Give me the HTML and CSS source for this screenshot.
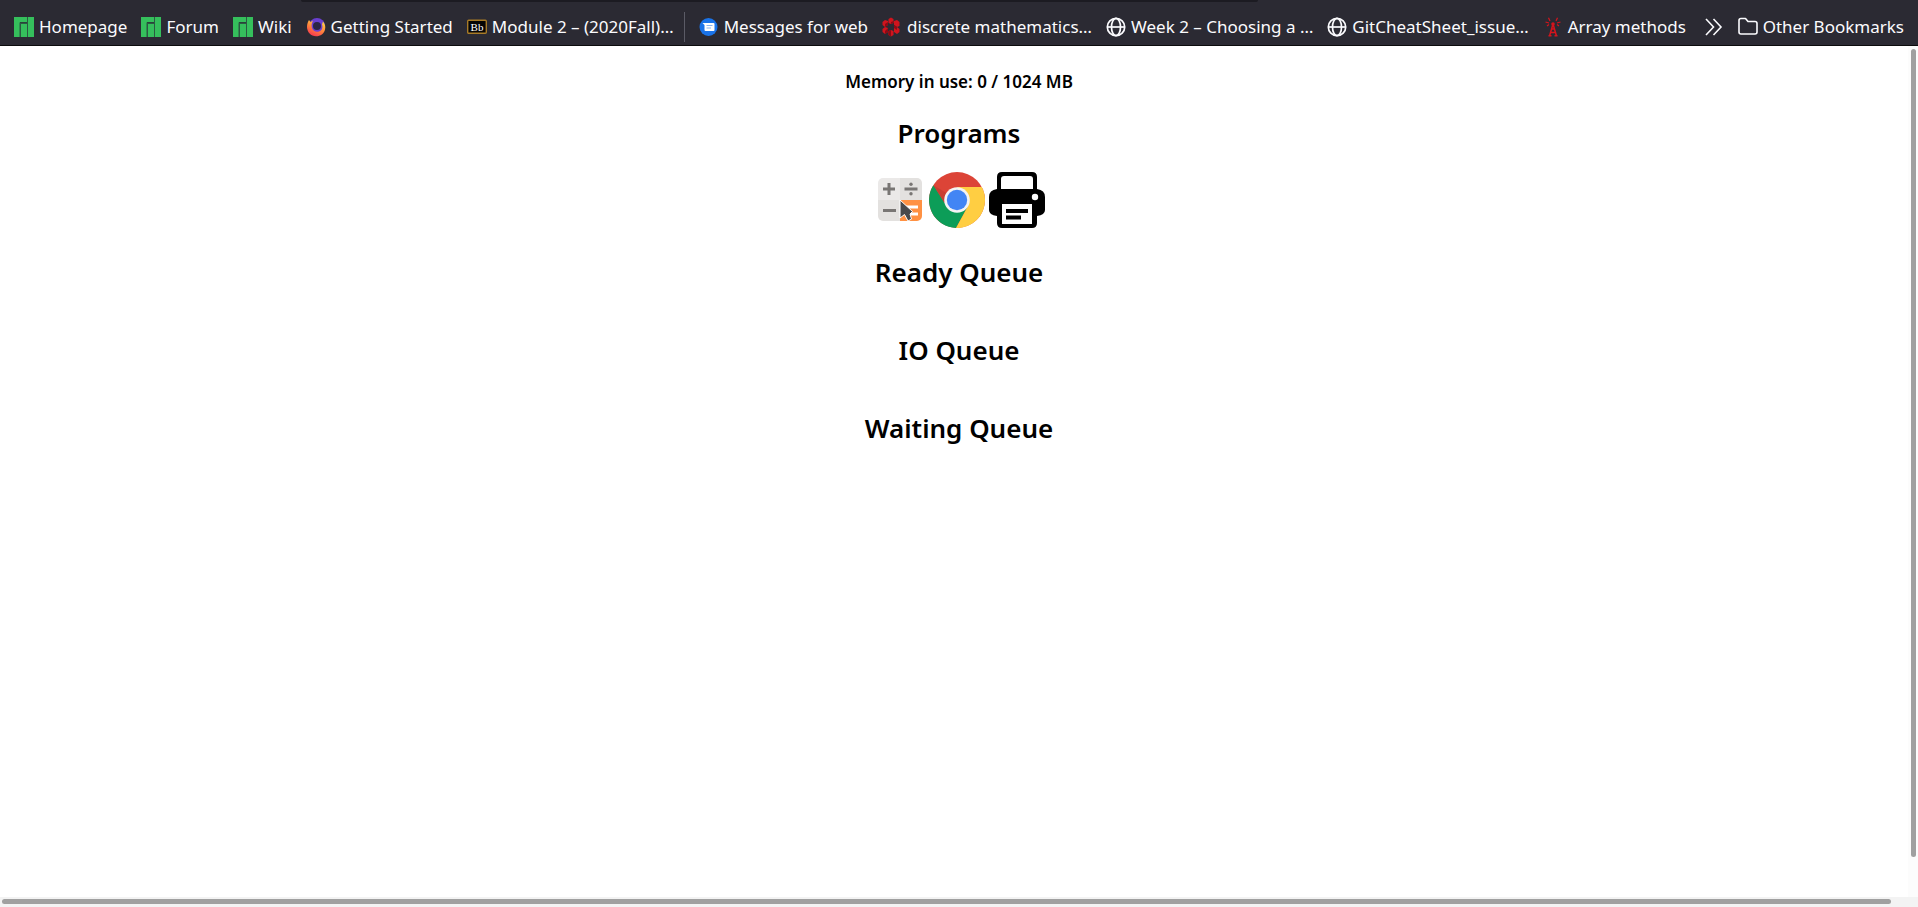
FILE: index.html
```
<!DOCTYPE html>
<html lang="en">
<head>
<meta charset="utf-8">
<title>Memory scheduler</title>
<link rel="stylesheet" href="styles.css">
</head>
<body>
<svg class="defs" aria-hidden="true">
  <symbol id="manjaro" viewBox="0 0 20 20"><path fill="#35bf5c" d="M0 0h13v5H6v15H0zM7 7h6v13H7zM14 0h6v20h-6z"/><path fill="#2b5a42" d="M5.500 5.500H13V7H7v13H5.500zM13 0h1v20h-1z"/></symbol>
  <symbol id="globe" viewBox="0 0 20 20"><g fill="none" stroke="#fbfbfe" stroke-width="1.700"><circle cx="10" cy="10" r="8.700"/><ellipse cx="10" cy="10" rx="4.500" ry="8.700"/><path d="M1.500 10h17"/></g></symbol>
</svg>
<nav class="bookmarks" aria-label="Bookmarks">
  <span class="tab-edge"></span>
  <a class="bookmark" href="#"><svg class="icon"><use href="#manjaro"/></svg>Homepage</a>
  <a class="bookmark" href="#"><svg class="icon"><use href="#manjaro"/></svg>Forum</a>
  <a class="bookmark" href="#"><svg class="icon"><use href="#manjaro"/></svg>Wiki</a>
  <a class="bookmark" href="#"><svg class="icon" viewBox="0 0 20 20"><defs><linearGradient id="fox" x1=".8" y1="0" x2=".3" y2="1"><stop offset="0" stop-color="#ffe14a"/><stop offset=".5" stop-color="#ff8a3c"/><stop offset="1" stop-color="#f5344f"/></linearGradient></defs><circle cx="11" cy="9" r="8" fill="#6a3fd0"/><path fill="url(#fox)" d="M3 3l1.500 2 2.500-1.500C6 6 5 8 6 11c1 3 4 4.500 7 3.500 3-1 4-4 3-7l1-3c2 2.500 2.800 5 2 8-.8 4-4.500 6.800-9 6.800C5 19.300 1 15 1 10c0-3 .8-5 2-7z"/><circle cx="11" cy="9" r="4" fill="#2c2545"/></svg>Getting Started</a>
  <a class="bookmark" href="#"><svg class="icon" viewBox="0 0 20 20"><rect x=".7" y="3.200" width="18.600" height="13" rx="1" fill="#050505" stroke="#a87b27" stroke-width="1.400"/><text class="bb" x="10" y="14" text-anchor="middle">Bb</text></svg>Module 2 – (2020Fall)…</a>
  <span class="divider"></span>
  <a class="bookmark" href="#"><svg class="icon" viewBox="0 0 20 20"><circle cx="9.500" cy="10" r="9" fill="#1a73e8"/><path fill="#fff" d="M3.500 6h11q1 0 1 1v6q0 1-1 1h-8q-1 0-1-1V8z"/><path stroke="#8ab4f0" d="M7.500 8.500h6M7.500 11h4.500"/></svg>Messages for web</a>
  <a class="bookmark" href="#"><svg class="icon" viewBox="0 0 20 20"><g fill="#d0141d"><path d="M6.500 2L9 .5 11.500 2v4L9 7 6.500 6zM12 4l3-1 2.500 2v4L15 10l-3-2zM12 11l3-1 2.500 2v3L15 17l-3-2zM6.500 14L9 13l2.500 1v4L9 19.500 6.500 18zM.5 12L3 10l3 1v4l-3 2-2.500-2zM.5 5L3 3l3 1v4l-3 2-2.500-2z"/></g><path fill="#8d0a14" d="M9 7l2.500-1V4L9 5zM6 8L3 10V7l3-2zM12 8l3 2v3l-3-2zM6 11v4l-3 2v-3zM9 13v6.500L6.500 18v-4z"/></svg>discrete mathematics…</a>
  <a class="bookmark" href="#"><svg class="icon"><use href="#globe"/></svg>Week 2 – Choosing a …</a>
  <a class="bookmark" href="#"><svg class="icon"><use href="#globe"/></svg>GitCheatSheet_issue…</a>
  <a class="bookmark" href="#"><svg class="icon" viewBox="0 0 20 20"><g fill="none" stroke="#d5141c" stroke-width="1.500"><path d="M10 7L6.500 19M10 7l3.500 12M8.500 12h3M7.500 15.500h5M5.500 18.800h3M11.500 18.800h3"/><path stroke-width="1.200" d="M7 4L5.500.8M13 4L14.500.8M6 6L2.500 5M14 6l3.500-1M6 7.500L4 9M14 7.500L16 9"/></g><circle cx="10" cy="7" r="1.800" fill="#d5141c"/></svg>Array methods</a>
  <button class="more" type="button" aria-label="Show more bookmarks"><svg class="icon" viewBox="0 0 20 20"><path fill="none" stroke="#fbfbfe" stroke-width="1.600" d="M2 2l7.500 8L2 18M9.500 2l7.500 8-7.500 8"/></svg></button>
  <a class="bookmark" href="#"><svg class="icon" viewBox="0 0 20 20"><path fill="none" stroke="#fbfbfe" stroke-width="1.600" stroke-linejoin="round" d="M3 1.500h4.500l2.500 3h7q2 0 2 2V15q0 2-2 2H3q-2 0-2-2V3.500q0-2 2-2z"/></svg>Other Bookmarks</a>
</nav>
<div class="viewport">
  <main class="page">
    <p class="memory">Memory in use: 0 / 1024 MB</p>
    <h2>Programs</h2>
    <div class="programs">
      <button type="button" aria-label="Calculator"><svg viewBox="0 0 56 56"><defs><clipPath id="calc"><rect x="9" y="6" width="44" height="43" rx="5"/></clipPath></defs><g clip-path="url(#calc)"><path fill="#ebe9e8" d="M9 6h22v22H9z"/><path fill="#e3e1df" d="M31 6h22v22H31zM9 28h22v21H9z"/><path fill="#ff9143" d="M31 28h22v21H31z"/></g><path stroke="#797674" stroke-width="3" d="M14 17h12M20 11v12M35.500 17h13M14 38.500h13"/><circle cx="42" cy="12.300" r="1.700" fill="#797674"/><circle cx="42" cy="21.700" r="1.700" fill="#797674"/><path stroke="#fff" stroke-width="3" d="M36 35h13M36 42h13"/><path fill="#48494c" stroke="#fff" stroke-width="1" d="M31 28v18l4.500-3.500 3.500 6.500 3.500-2-1.500-5 2.500-2.500z"/></svg></button>
      <button type="button" aria-label="Chrome"><svg viewBox="0 0 56 56"><circle cx="28" cy="28" r="28" fill="#dc4437"/><path fill="#0c9d58" d="M4.300 13.200A28 28 0 0 0 27 56L39 34 28 28 15.500 31z"/><path fill="#ffce42" d="M28 15h24.800A28 28 0 0 1 27 56l12-22z"/><path fill="#b43a2e" d="M4.300 13.200L16 31l3-9z" opacity=".5"/><circle cx="28" cy="28" r="12.800" fill="#f4f4f4"/><circle cx="28" cy="28" r="10.200" fill="#4285f4"/></svg></button>
      <button type="button" aria-label="Printer"><svg viewBox="0 0 56 56"><path d="M13 0h30q5 0 5 5v12q8 1 8 8v13q0 5-8 6v7q0 5-5 5H13q-5 0-5-5v-7q-8-1-8-6V25q0-7 8-8V5q0-5 5-5z"/><path fill="#fff" d="M15 4h26q3 0 3 3v10H12V7q0-3 3-3zM13 32h30v20H13z"/><path stroke="#000" stroke-width="4" d="M17 39h22M17 45.500h15"/><circle cx="46" cy="25" r="3.200" fill="#fff"/></svg></button>
    </div>
    <h2>Ready Queue</h2>
    <div class="queue"></div>
    <h2>IO Queue</h2>
    <div class="queue"></div>
    <h2>Waiting Queue</h2>
    <div class="queue"></div>
  </main>
  <div class="scroll-y"><span></span></div>
  <div class="scroll-x"><span></span></div>
</div>
</body>
</html>
```
FILE: styles.css
```
* { box-sizing: border-box; }
body {
  margin: 0;
  min-height: 100vh;
  display: flex;
  flex-direction: column;
  background: #fff;
  color: #000;
  font-family: "Noto Sans", sans-serif;
}
.defs { position: absolute; width: 0; height: 0; }
.bookmarks {
  position: relative;
  display: flex;
  align-items: center;
  gap: 14px;
  padding: 8px 14px 0;
  height: 46px;
  background: #2b2a33;
  border-bottom: 1px solid #0c0c0d;
  color: #fbfbfe;
  font-size: 17px;
  line-height: 24px;
  white-space: nowrap;
}
.tab-edge {
  position: absolute;
  top: 0;
  left: 301px;
  right: 660px;
  height: 2px;
  background: #1c1b22;
  border-radius: 0 0 2px 2px;
}
.bookmark { display: flex; align-items: center; gap: 5px; color: inherit; text-decoration: none; }
.icon { display: block; width: 20px; height: 20px; flex: none; }
.bb { font: 11px "Liberation Serif", serif; fill: #fff; }
.divider { flex: none; width: 1px; height: 30px; margin-left: -4px; background: #5b5b66; }
.more { margin-left: auto; padding: 0; border: 0; background: none; }
.viewport {
  flex: 1;
  display: grid;
  grid-template-columns: 1fr 10px;
  grid-template-rows: 1fr 10px;
}
.page {
  grid-column: 1 / 3;
  grid-row: 1;
  display: flex;
  flex-direction: column;
  align-items: center;
  padding-top: 24px;
}
.memory { margin: 0; font-size: 17px; font-weight: 600; line-height: 24px; }
h2 { margin: 20px 0; font-size: 26px; font-weight: 600; line-height: 38px; }
.programs { display: flex; gap: 4px; padding: 0 4px 5px 0; }
.programs button { padding: 0; border: 0; background: none; }
.programs svg { display: block; width: 56px; height: 56px; }
.scroll-y { grid-column: 2; grid-row: 1; padding: 3px 2px 0 3px; background: #fcfcfc; }
.scroll-y span { display: block; height: calc(100% - 40px); border-radius: 3px; background: #a0a0a0; }
.scroll-x { grid-column: 1 / 3; grid-row: 2; padding: 2px 2px 3px; background: #f3f3f3; }
.scroll-x span { display: block; width: 98.700%; height: 5px; border-radius: 3px; background: #a0a0a0; }
```
